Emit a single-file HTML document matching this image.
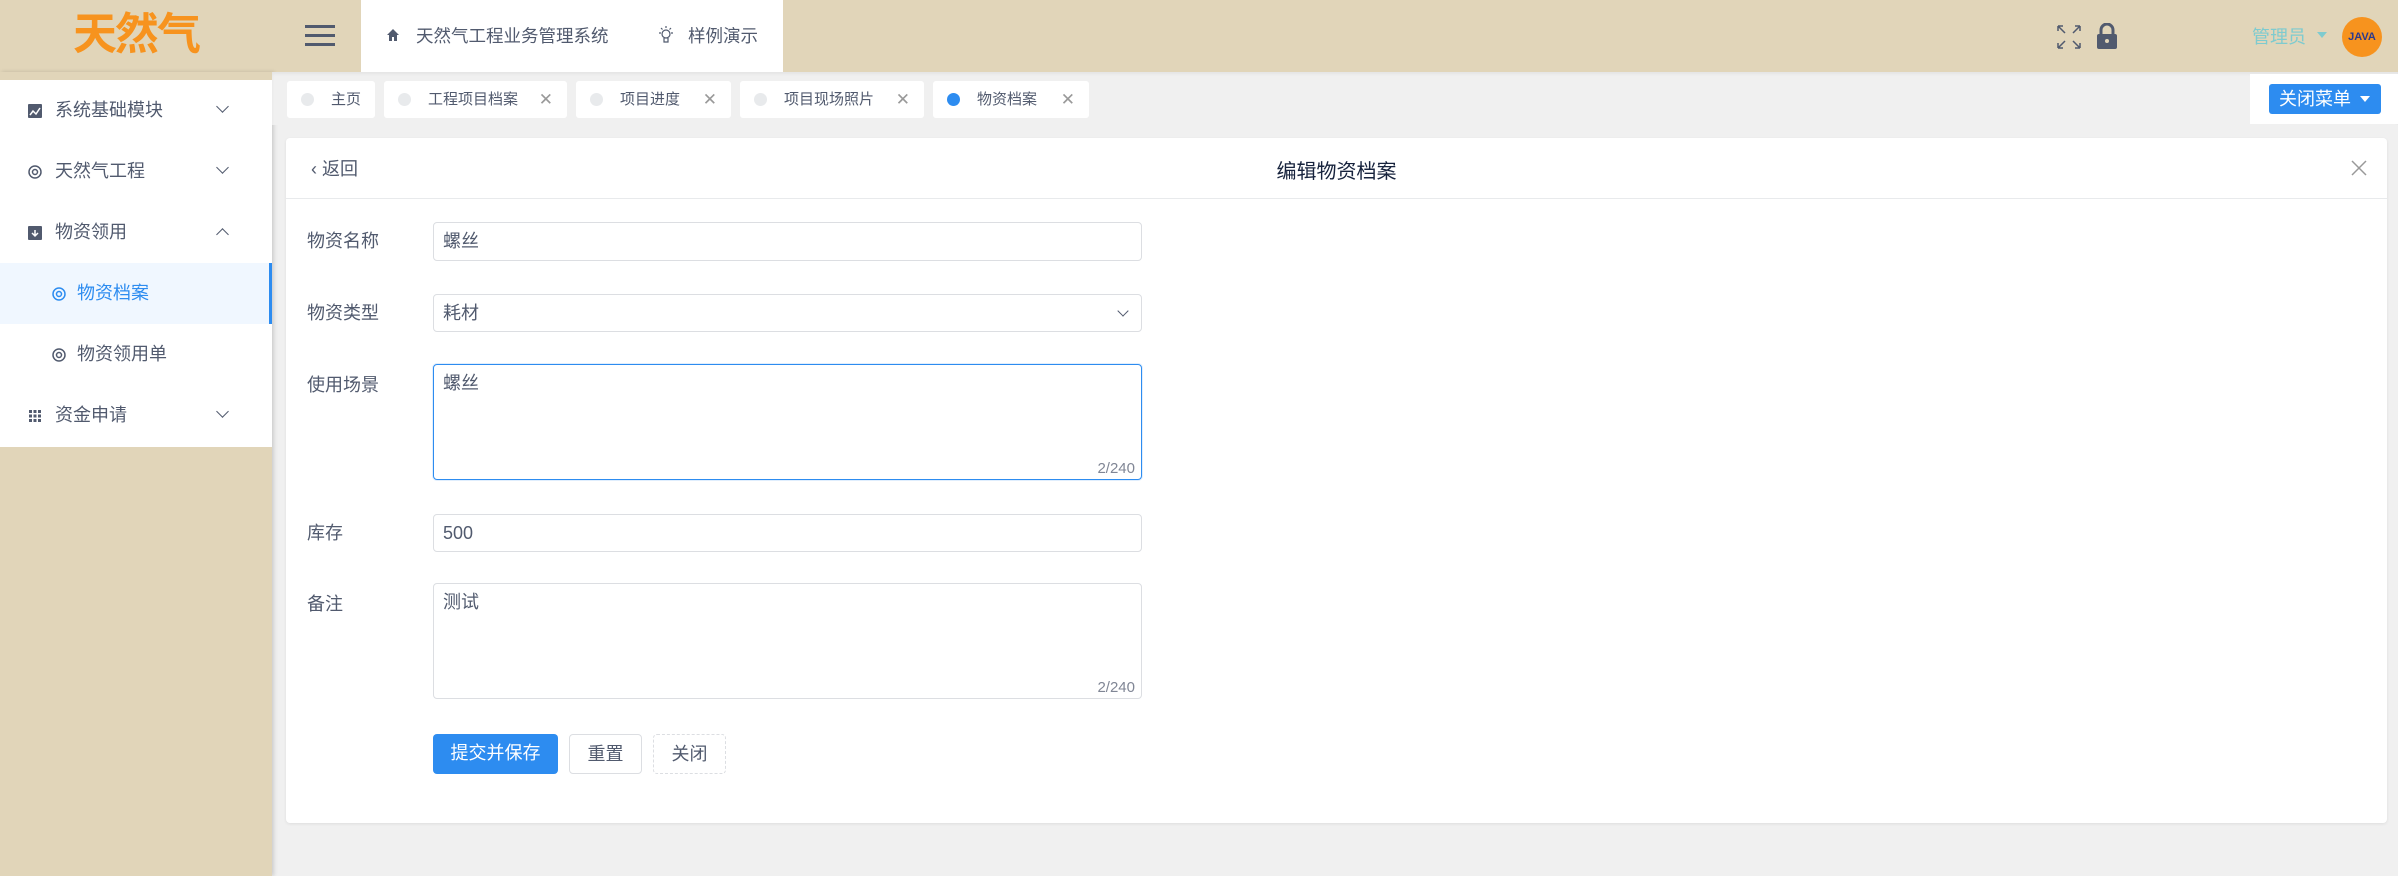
<!DOCTYPE html>
<html><head><meta charset="utf-8">
<style>
*{box-sizing:border-box;margin:0;padding:0}
body{width:2398px;height:876px;overflow:hidden;background:#f0f0f0;font-family:"Liberation Sans","Noto Sans CJK SC",sans-serif;color:#515a6e;position:relative}
.abs{position:absolute}
.hdr{left:0;top:0;width:2398px;height:72px;background:#e1d5b9}
.logo{left:0;top:0;width:272px;height:72px;text-align:center;line-height:70px;font-size:44px;color:#f7931e;font-weight:bold;letter-spacing:-2px}
.side{left:0;top:72px;width:272px;height:804px;background:#e1d5b9;box-shadow:2px 0 4px rgba(0,0,0,.15)}
.menu{left:0;top:80px;width:272px;height:367px;background:#fff}
.mi{position:absolute;left:0;width:272px;height:61px;font-size:18px;color:#515a6e;line-height:61px}
.mi .ic{position:absolute;left:28px;top:24px;width:14px;height:14px}
.mi .tx{position:absolute;left:55px}
.mi .ar{position:absolute;left:218px;top:22px;width:9px;height:9px;border-right:1.8px solid #515a6e;border-bottom:1.8px solid #515a6e;transform:rotate(45deg)}
.mi .ar.up{top:28px;transform:rotate(-135deg)}
.sel{background:#f0f7ff;color:#2d8cf0;border-right:3px solid #2d8cf0}
.white{left:361px;top:0;width:422px;height:72px;background:#fff}
.tab{position:absolute;top:81px;height:37px;background:#fff;border-radius:3px;font-size:15px;line-height:37px;color:#515a6e}
.tab .dot{position:absolute;left:14px;top:12px;width:13px;height:13px;border-radius:50%;background:#e8eaec}
.tab .t{position:absolute;left:44px}
.tab .x{position:absolute;right:14px;color:#999;font-size:17px}
.card{left:286px;top:138px;width:2101px;height:685px;background:#fff;border-radius:4px;box-shadow:0 1px 3px rgba(0,0,0,.08)}
.ch{position:absolute;left:0;top:0;width:100%;height:61px;border-bottom:1px solid #e8eaec}
.lbl{position:absolute;left:21px;font-size:18px;color:#515a6e}
.inp{position:absolute;left:147px;width:709px;border:1px solid #dcdee2;border-radius:4px;font-size:18px;color:#515a6e;padding-left:9px}
.cnt{position:absolute;right:6px;bottom:2px;font-size:15px;color:#808695}
.btn{position:absolute;top:596px;height:40px;border-radius:4px;font-size:18px;line-height:38px;text-align:center}
</style></head><body>
<div class="abs hdr"></div>
<div class="abs side"></div>
<div class="abs logo">天然气</div>
<div class="abs menu">
 <div class="mi" style="top:0"><svg class="ic" viewBox="0 0 14 14"><rect width="14" height="14" rx="1" fill="#515a6e"/><path d="M2 11l3-4 3 3 4-6" stroke="#fff" stroke-width="1.5" fill="none"/></svg><span class="tx">系统基础模块</span><i class="ar"></i></div>
 <div class="mi" style="top:61px"><svg class="ic" viewBox="0 0 14 14"><circle cx="7" cy="7" r="6" fill="none" stroke="#515a6e" stroke-width="1.5"/><circle cx="7" cy="7" r="2.5" fill="none" stroke="#515a6e" stroke-width="1.5"/></svg><span class="tx">天然气工程</span><i class="ar"></i></div>
 <div class="mi" style="top:122px"><svg class="ic" viewBox="0 0 14 14"><rect width="14" height="14" rx="1" fill="#515a6e"/><path d="M7 4v6M4 7l3 3 3-3" stroke="#fff" stroke-width="1.5" fill="none"/></svg><span class="tx">物资领用</span><i class="ar up"></i></div>
 <div class="mi sel" style="top:183px"><svg class="ic" style="left:52px" viewBox="0 0 14 14"><circle cx="7" cy="7" r="6" fill="none" stroke="#2d8cf0" stroke-width="1.5"/><circle cx="7" cy="7" r="2.5" fill="none" stroke="#2d8cf0" stroke-width="1.5"/></svg><span class="tx" style="left:77px">物资档案</span></div>
 <div class="mi" style="top:244px"><svg class="ic" style="left:52px" viewBox="0 0 14 14"><circle cx="7" cy="7" r="6" fill="none" stroke="#515a6e" stroke-width="1.5"/><circle cx="7" cy="7" r="2.5" fill="none" stroke="#515a6e" stroke-width="1.5"/></svg><span class="tx" style="left:77px">物资领用单</span></div>
 <div class="mi" style="top:305px"><svg class="ic" viewBox="0 0 14 14" fill="#515a6e"><rect x="1" y="1" width="3" height="3"/><rect x="5.5" y="1" width="3" height="3"/><rect x="10" y="1" width="3" height="3"/><rect x="1" y="5.5" width="3" height="3"/><rect x="5.5" y="5.5" width="3" height="3"/><rect x="10" y="5.5" width="3" height="3"/><rect x="1" y="10" width="3" height="3"/><rect x="5.5" y="10" width="3" height="3"/><rect x="10" y="10" width="3" height="3"/></svg><span class="tx">资金申请</span><i class="ar"></i></div>
</div>
<svg class="abs" style="left:305px;top:25px" width="30" height="22" viewBox="0 0 30 22"><rect y="0" width="30" height="3" fill="#515a6e"/><rect y="9" width="30" height="3" fill="#515a6e"/><rect y="18" width="30" height="3" fill="#515a6e"/></svg>
<div class="abs white"></div>
<svg class="abs" style="left:386px;top:28px" width="14" height="14" viewBox="0 0 14 14"><path d="M7 1L1 7h2v6h3V9h2v4h3V7h2z" fill="#515a6e"/></svg>
<div class="abs" style="left:416px;top:23px;font-size:17.5px;color:#515a6e">天然气工程业务管理系统</div>
<svg class="abs" style="left:657px;top:25px" width="18" height="20" viewBox="0 0 18 20"><circle cx="9" cy="9" r="4" fill="none" stroke="#515a6e" stroke-width="1.2"/><path d="M7 13v4h4v-4M9 1v2M2 8h2M14 8h2M4 3l1.5 1.5M14 3l-1.5 1.5" stroke="#515a6e" stroke-width="1.2" fill="none"/></svg>
<div class="abs" style="left:688px;top:23px;font-size:17.5px;color:#515a6e">样例演示</div>
<svg class="abs" style="left:2057px;top:25px" width="24" height="24" viewBox="0 0 24 24" stroke="#515a6e" stroke-width="1.5" fill="none"><path d="M1 1l7 7M1 1h5M1 1v5M23 1l-7 7M23 1h-5M23 1v5M1 23l7-7M1 23h5M1 23v-5M23 23l-7-7M23 23h-5M23 23v-5"/></svg>
<svg class="abs" style="left:2097px;top:23px" width="20" height="26" viewBox="0 0 20 26"><path d="M4 11V7a6 6 0 0 1 12 0v4" stroke="#515a6e" stroke-width="3" fill="none"/><rect x="0" y="11" width="20" height="15" rx="2" fill="#515a6e"/><circle cx="10" cy="18" r="2" fill="#e1d5b9"/></svg>
<div class="abs" style="left:2252px;top:23px;font-size:18px;color:#7ecbcf">管理员</div>
<div class="abs" style="left:2317px;top:32px;border:5px solid transparent;border-top:6px solid #7ecbcf"></div>
<div class="abs" style="left:2342px;top:17px;width:40px;height:40px;border-radius:50%;background:#f7931e;color:#2b3a8c;font-size:11px;font-weight:bold;text-align:center;line-height:40px">JAVA</div>
<div class="abs" style="left:272px;top:72px;width:2126px;height:53px;background:#f0f0f0;box-shadow:inset 0 2px 3px rgba(0,0,0,.05)"></div>
<div class="tab" style="left:287px;width:88px"><i class="dot"></i><span class="t" style="left:44px">主页</span></div>
<div class="tab" style="left:384px;width:183px"><i class="dot"></i><span class="t">工程项目档案</span><span class="x">✕</span></div>
<div class="tab" style="left:576px;width:155px"><i class="dot"></i><span class="t">项目进度</span><span class="x">✕</span></div>
<div class="tab" style="left:740px;width:184px"><i class="dot"></i><span class="t">项目现场照片</span><span class="x">✕</span></div>
<div class="tab" style="left:933px;width:156px"><i class="dot" style="background:#2d8cf0"></i><span class="t">物资档案</span><span class="x">✕</span></div>
<div class="abs" style="left:2250px;top:74px;width:148px;height:50px;background:#fff"></div>
<div class="abs" style="left:2269px;top:84px;width:112px;height:30px;background:#2d8cf0;border-radius:3px;color:#fff;font-size:18px;line-height:30px;padding-left:10px">关闭菜单</div>
<div class="abs" style="left:2360px;top:96px;border:5px solid transparent;border-top:6px solid #fff"></div>
<div class="abs card">
 <div class="ch">
  <div style="position:absolute;left:25px;top:17px;font-size:18px;color:#515a6e">‹ 返回</div>
  <div style="position:absolute;left:0;width:100%;text-align:center;top:17px;font-size:20px;color:#17233d">编辑物资档案</div>
  <svg style="position:absolute;right:20px;top:22px" width="16" height="16" viewBox="0 0 16 16"><path d="M1 1l14 14M15 1L1 15" stroke="#999" stroke-width="1.5"/></svg>
 </div>
 <div class="lbl" style="top:89px">物资名称</div>
 <div class="inp" style="top:84px;height:39px;line-height:37px">螺丝</div>
 <div class="lbl" style="top:161px">物资类型</div>
 <div class="inp" style="top:156px;height:38px;line-height:36px">耗材<span style="position:absolute;right:14px;top:12px;width:8px;height:8px;border-right:1.5px solid #515a6e;border-bottom:1.5px solid #515a6e;transform:rotate(45deg)"></span></div>
 <div class="lbl" style="top:233px">使用场景</div>
 <div class="inp" style="top:226px;height:116px;padding-top:4px;border-color:#2d8cf0;box-shadow:0 0 0 1px rgba(45,140,240,.15)">螺丝<span class="cnt">2/240</span></div>
 <div class="lbl" style="top:381px">库存</div>
 <div class="inp" style="top:376px;height:38px;line-height:36px">500</div>
 <div class="lbl" style="top:452px">备注</div>
 <div class="inp" style="top:445px;height:116px;padding-top:4px">测试<span class="cnt">2/240</span></div>
 <div class="btn" style="left:147px;width:125px;background:#2d8cf0;color:#fff">提交并保存</div>
 <div class="btn" style="left:283px;width:73px;border:1px solid #dcdee2;color:#515a6e">重置</div>
 <div class="btn" style="left:367px;width:73px;border:1px dashed #dcdee2;color:#515a6e">关闭</div>
</div>
</body></html>
